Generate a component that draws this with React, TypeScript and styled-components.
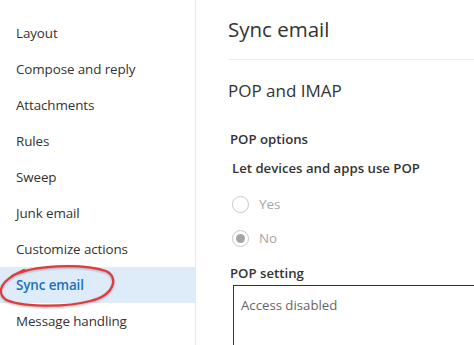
import React from "react";
import styled, { createGlobalStyle } from "styled-components";

const Global = createGlobalStyle`
  html, body { margin: 0; padding: 0; background: #ffffff; }
  body { font-family: "Open Sans", "Noto Sans", sans-serif; color: #333333; }
`;

const Page = styled.div`
  display: flex;
  width: 474px;
  height: 345px;
  overflow: hidden;
  background: #ffffff;
`;

const Sidebar = styled.nav`
  width: 196px;
  flex: none;
  border-right: 1px solid #e8e8e8;
  padding-top: 15px;
  box-sizing: border-box;
`;

const NavItem = styled.div<{ $selected?: boolean }>`
  position: relative;
  height: 36px;
  display: flex;
  align-items: center;
  padding-left: 16px;
  font-size: 13.4px;
  letter-spacing: -0.1px;
  color: ${(p) => (p.$selected ? "#1a6fbf" : "#333333")};
  font-weight: ${(p) => (p.$selected ? 600 : 400)};
  background: ${(p) => (p.$selected ? "#deecf9" : "transparent")};
`;

const Ellipse = styled.svg`
  position: absolute;
  left: 0;
  top: -3px;
  width: 116px;
  height: 44px;
  pointer-events: none;
  overflow: visible;
  filter: drop-shadow(0 1.5px 1px rgba(0, 0, 0, 0.3));
`;

const Content = styled.main`
  flex: 1;
  padding-left: 32px;
  min-width: 0;
`;

const Title = styled.h1`
  margin: 0;
  height: 60px;
  display: flex;
  align-items: center;
  font-size: 20.5px;
  font-weight: 400;
  color: #333333;
  border-bottom: 1px solid #ececec;
  box-sizing: border-box;
  padding-bottom: 1px;
`;

const Section = styled.h2`
  margin: 0;
  height: 60px;
  display: flex;
  align-items: center;
  font-size: 17px;
  font-weight: 400;
  color: #333333;
`;

const Label = styled.div<{ $indent?: number; $h: number; $top?: number }>`
  height: ${(p) => p.$h}px;
  box-sizing: border-box;
  padding-top: ${(p) => p.$top ?? 0}px;
  display: flex;
  align-items: center;
  padding-left: ${(p) => p.$indent ?? 2}px;
  font-size: 13.2px;
  font-weight: 600;
  color: #333333;
`;

const RadioGroup = styled.div`
  padding-top: 9px;
`;

const RadioRow = styled.label`
  height: 34px;
  display: flex;
  align-items: center;
  gap: 10px;
  padding-left: 4px;
  font-size: 13.4px;
  color: #a6a6a6;
`;

const RadioCircle = styled.span<{ $checked?: boolean }>`
  width: 17px;
  height: 17px;
  border-radius: 50%;
  border: 1px solid #c8c8c8;
  box-sizing: border-box;
  display: flex;
  align-items: center;
  justify-content: center;
  &::after {
    content: "";
    display: ${(p) => (p.$checked ? "block" : "none")};
    width: 9px;
    height: 9px;
    border-radius: 50%;
    background: #a6a6a6;
  }
`;

const TextBox = styled.div`
  margin-left: 5px;
  height: 80px;
  border: 1px solid #333333;
  border-right: none;
  padding: 10px 7px;
  font-size: 13.2px;
  line-height: 18px;
  color: #666666;
`;

const navItems = [
  "Layout",
  "Compose and reply",
  "Attachments",
  "Rules",
  "Sweep",
  "Junk email",
  "Customize actions",
  "Sync email",
  "Message handling",
];

export default function App() {
  return (
    <>
      <Global />
      <Page>
        <Sidebar>
          {navItems.map((item) => {
            const selected = item === "Sync email";
            return (
              <NavItem key={item} $selected={selected}>
                {item}
                {selected && (
                  <Ellipse viewBox="0 0 116 44">
                    <path
                      d="M12 12 C32 1 82 -1 106 7 C119 13 115 31 90 37 C64 44 18 43 5 35 C-3 28 -1 17 24 6"
                      fill="none"
                      stroke="#e5383b"
                      strokeWidth="2.2"
                      strokeLinecap="round"
                    />
                  </Ellipse>
                )}
              </NavItem>
            );
          })}
        </Sidebar>
        <Content>
          <Title>Sync email</Title>
          <Section>POP and IMAP</Section>
          <Label $h={38}>POP options</Label>
          <Label $h={20} $indent={4}>Let devices and apps use POP</Label>
          <RadioGroup>
            <RadioRow>
              <RadioCircle />
              Yes
            </RadioRow>
            <RadioRow>
              <RadioCircle $checked />
              No
            </RadioRow>
          </RadioGroup>
          <Label $h={30} $top={6}>POP setting</Label>
          <TextBox>Access disabled</TextBox>
        </Content>
      </Page>
    </>
  );
}
